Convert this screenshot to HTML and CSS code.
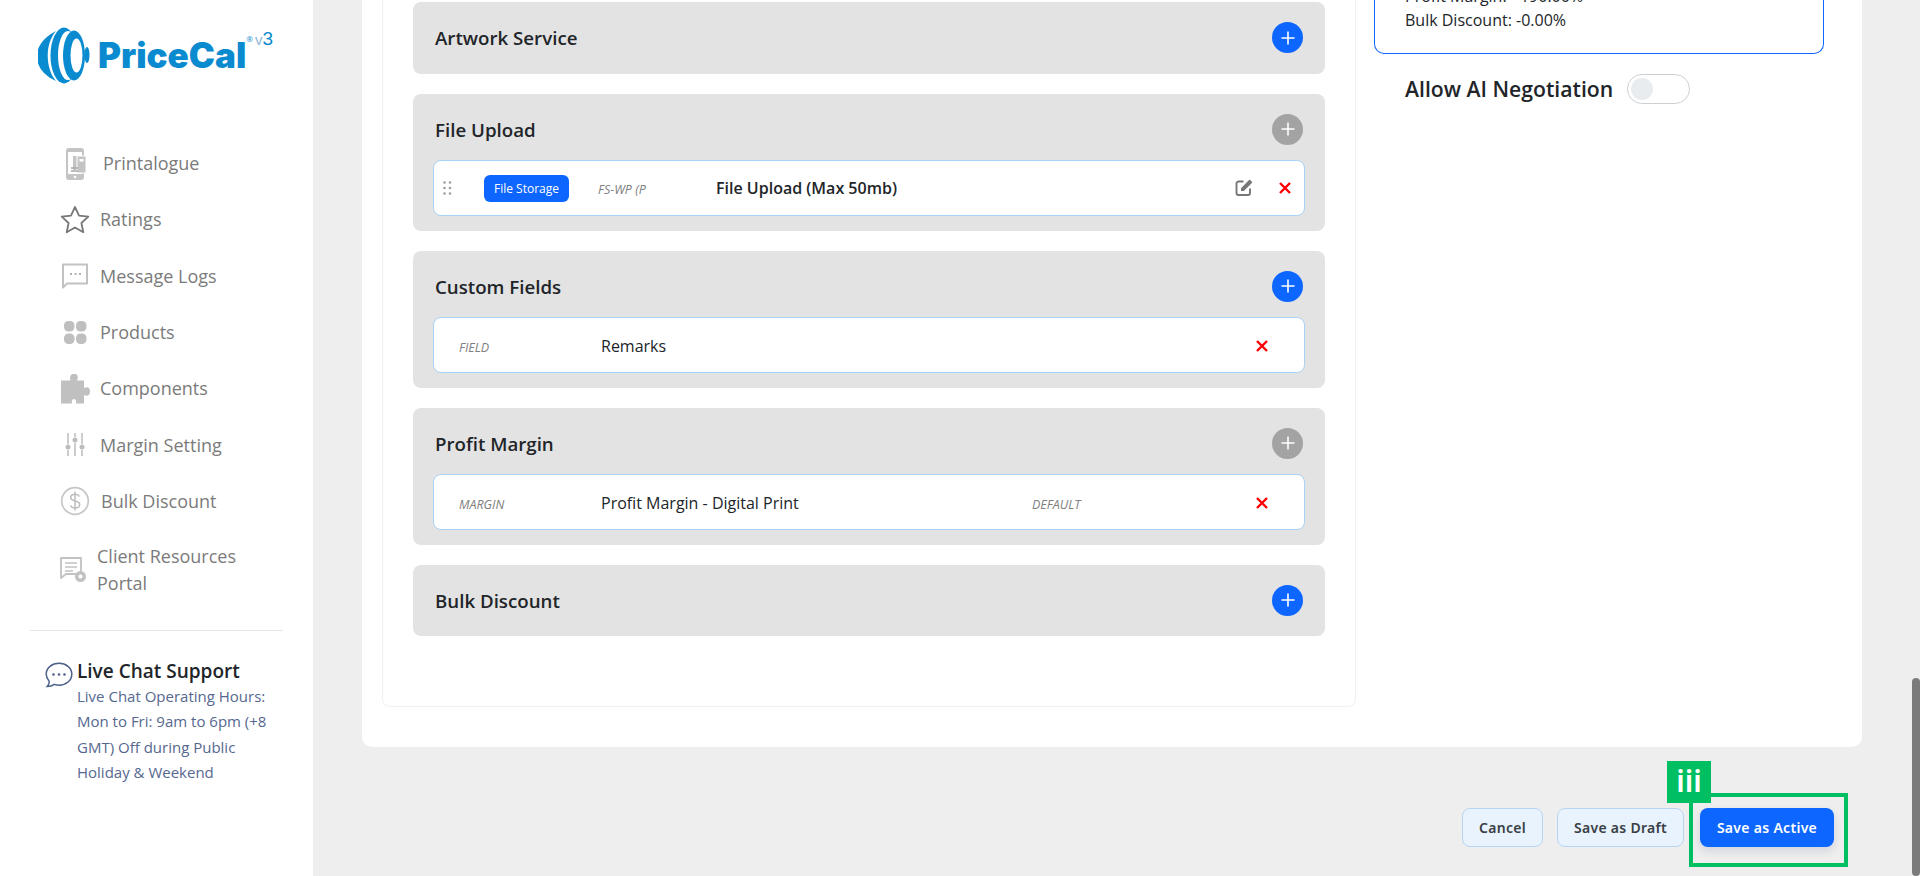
FILE: index.html
```html
<!DOCTYPE html>
<html lang="en">
<head>
<meta charset="utf-8">
<title>PriceCal</title>
<link rel="stylesheet" href="styles.css">
</head>
<body>
<div class="app">
  <aside class="sidebar">
    <div class="logo">
      <svg class="logo-mark" viewBox="38 27 52 57" width="52" height="57" aria-hidden="true">
        <path class="logo-fill" d="M56 31C30 44 31 70 56 81C46 70 44 45 56 31Z"/>
        <ellipse class="logo-fill" cx="64" cy="55.500" rx="13.500" ry="28"/>
        <ellipse class="logo-gap" cx="68" cy="55.500" rx="10" ry="24.500"/>
        <ellipse class="logo-fill" cx="74" cy="55.500" rx="11" ry="25"/>
        <ellipse class="logo-gap" cx="76.500" cy="55.500" rx="6" ry="17"/>
        <ellipse class="logo-fill" cx="87" cy="55" rx="2.500" ry="8"/>
      </svg>
      <span class="logo-name">PriceCal</span>
      <span class="logo-reg">®</span>
      <span class="logo-ver"><span class="logo-v">v</span>3</span>
    </div>
    <nav class="nav">
      <a class="nav-item nav-print">
        <svg class="nav-icon" viewBox="0 0 30 32" width="30" height="32" aria-hidden="true">
          <rect x="6" y="0" width="18" height="32" rx="3" fill="#c4c4c4"/>
          <rect x="8" y="4" width="14" height="22" fill="#fff"/>
          <rect x="13" y="8" width="5" height="14" fill="#c4c4c4"/>
          <rect x="17" y="8" width="9" height="17" fill="#c4c4c4" stroke="#fff" stroke-width="1"/>
          <rect x="19.500" y="11" width="4" height="2.500" fill="#fff"/>
          <path d="M11 20h7M11 23h7" stroke="#a8a8a8" stroke-width="1.500"/>
          <circle cx="15" cy="29" r="1.300" fill="#fff"/>
        </svg>
        <span>Printalogue</span>
      </a>
      <a class="nav-item">
        <svg class="nav-icon" viewBox="0 0 30 30" width="30" height="30" aria-hidden="true">
          <path d="M15 2l4 8.600 9.300 1.100-6.900 6.300 1.900 9.200-8.300-4.700-8.300 4.700 1.900-9.200-6.900-6.300 9.300-1.100z" fill="none" stroke="#777" stroke-width="1.800" stroke-linejoin="round"/>
        </svg>
        <span>Ratings</span>
      </a>
      <a class="nav-item">
        <svg class="nav-icon" viewBox="0 0 30 26" width="30" height="26" aria-hidden="true">
          <path d="M3 1.500h24v19H7l-4 4z" fill="none" stroke="#c2c2c2" stroke-width="2" stroke-linejoin="round"/>
          <path d="M10 11h2M14.500 11h2M19 11h2" stroke="#999" stroke-width="1.500"/>
        </svg>
        <span>Message Logs</span>
      </a>
      <a class="nav-item">
        <svg class="nav-icon" viewBox="0 0 30 24" width="30" height="24" aria-hidden="true">
          <rect x="4" y="0" width="10.500" height="10.500" rx="4.500" fill="#bfbfbf"/>
          <rect x="16" y="0" width="10.500" height="10.500" rx="4.500" fill="#bfbfbf"/>
          <rect x="4" y="12.500" width="10.500" height="10.500" rx="4.500" fill="#bfbfbf"/>
          <rect x="16" y="12.500" width="10.500" height="10.500" rx="4.500" fill="#bfbfbf"/>
        </svg>
        <span>Products</span>
      </a>
      <a class="nav-item">
        <svg class="nav-icon" viewBox="0 0 30 30" width="30" height="30" aria-hidden="true">
          <path d="M1 6.500H10.500C9 2 12 0 12 0h4c2 1 2.500 3.500 1 6.500h7v7.500c3-1.500 6-.5 6 3.500s-3 5-6 3.500V29.500H16c.8-3-.5-4.500-2-4.500s-2.800 1.500-2 4.500H1z" fill="#c0c0c0"/>
        </svg>
        <span>Components</span>
      </a>
      <a class="nav-item">
        <svg class="nav-icon" viewBox="0 0 30 24" width="30" height="24" aria-hidden="true">
          <path d="M8 0v11M8 17v6M15 0v4M15 10v13M22 0v11M22 17v6" stroke="#c0c0c0" stroke-width="1.600"/>
          <circle cx="8" cy="14" r="2.500" fill="#bdbdbd"/>
          <circle cx="15" cy="7" r="2.500" fill="#bdbdbd"/>
          <circle cx="22" cy="14" r="2.500" fill="#bdbdbd"/>
        </svg>
        <span>Margin Setting</span>
      </a>
      <a class="nav-item nav-bulk">
        <svg class="nav-icon" viewBox="0 0 30 30" width="30" height="30" aria-hidden="true">
          <circle cx="15" cy="15" r="13.300" fill="none" stroke="#c6c6c6" stroke-width="1.700"/>
          <path d="M19.500 10.500c-1-1.600-2.600-2.200-4.500-2.200-2.500 0-4.300 1.200-4.300 3.300 0 4.800 9 2.200 9 7 0 2.200-2 3.400-4.700 3.400-2 0-3.700-.8-4.600-2.500M15 5.500v19" fill="none" stroke="#bdbdbd" stroke-width="1.500"/>
        </svg>
        <span>Bulk Discount</span>
      </a>
      <a class="nav-item nav-client">
        <svg class="nav-icon" viewBox="0 0 30 26" width="30" height="26" aria-hidden="true">
          <path d="M1 1h20v16H6l-5 4z" fill="none" stroke="#c2c2c2" stroke-width="1.800" stroke-linejoin="round"/>
          <path d="M5 6h12M5 10h12M5 14h8" stroke="#c2c2c2" stroke-width="1.500"/>
          <circle cx="20.500" cy="19.500" r="5.500" fill="#c2c2c2"/>
          <circle cx="20.500" cy="19.500" r="2" fill="#fff"/>
        </svg>
        <span>Client Resources Portal</span>
      </a>
    </nav>
    <hr class="side-rule">
    <div class="chat">
      <svg class="chat-icon" viewBox="0 0 28 26" width="28" height="26" aria-hidden="true">
        <path d="M14 1.200c7 0 12.800 4.700 12.800 11 0 6.200-5.800 11-12.800 11-1.700 0-3.300-.3-4.800-.8-1.800 1.400-4.300 2.200-7 2.200 1.400-1.500 2.100-3.100 2.100-5C2.800 17.600 1.200 15 1.200 12.200c0-6.300 5.800-11 12.800-11z" fill="none" stroke="#4d6189" stroke-width="1.500"/>
        <circle cx="8.500" cy="12.500" r="1.300" fill="#4d6189"/>
        <circle cx="14" cy="12.500" r="1.300" fill="#4d6189"/>
        <circle cx="19.500" cy="12.500" r="1.300" fill="#4d6189"/>
      </svg>
      <div class="chat-body">
        <h4 class="chat-title">Live Chat Support</h4>
        <p class="chat-text">Live Chat Operating Hours: Mon to Fri: 9am to 6pm (+8 GMT) Off during Public Holiday &amp; Weekend</p>
      </div>
    </div>
  </aside>
  <main class="main">
    <div class="card">
      <div class="builder">
        <section class="group">
          <header class="group-head"><h3>Artwork Service</h3><span class="add"><svg viewBox="0 0 16 16" width="16" height="16" aria-hidden="true"><path d="M8 1.500v13M1.500 8h13"/></svg></span></header>
        </section>
        <section class="group">
          <header class="group-head"><h3>File Upload</h3><span class="add add-off"><svg viewBox="0 0 16 16" width="16" height="16" aria-hidden="true"><path d="M8 1.500v13M1.500 8h13"/></svg></span></header>
          <div class="row row-file">
            <svg class="drag" viewBox="0 0 9 14" width="9" height="14" aria-hidden="true"><g fill="#9aa0a8"><circle cx="1.500" cy="1.500" r="1.300"/><circle cx="7" cy="1.500" r="1.300"/><circle cx="1.500" cy="7" r="1.300"/><circle cx="7" cy="7" r="1.300"/><circle cx="1.500" cy="12.500" r="1.300"/><circle cx="7" cy="12.500" r="1.300"/></g></svg>
            <span class="badge">File Storage</span>
            <span class="code code-file">FS-WP (P</span>
            <span class="name">File Upload (Max 50mb)</span>
            <svg class="edit" viewBox="0 0 18 17" width="18" height="17" aria-hidden="true">
              <path d="M8.500 2.500H3.500a2 2 0 0 0-2 2v9.500a2 2 0 0 0 2 2H13a2 2 0 0 0 2-2V9.500" fill="none" stroke="#777" stroke-width="1.900"/>
              <path d="M6 9.200L13.800 1.300a1.200 1.200 0 0 1 1.700 0l1.200 1.200a1.200 1.200 0 0 1 0 1.700L8.800 12H6z" fill="#777"/>
            </svg>
            <svg class="del" viewBox="0 0 12 12" width="12" height="12" aria-hidden="true"><path d="M1 1l10 10M11 1L1 11"/></svg>
          </div>
        </section>
        <section class="group">
          <header class="group-head"><h3>Custom Fields</h3><span class="add"><svg viewBox="0 0 16 16" width="16" height="16" aria-hidden="true"><path d="M8 1.500v13M1.500 8h13"/></svg></span></header>
          <div class="row row-plain">
            <span class="code">FIELD</span>
            <span class="name">Remarks</span>
            <svg class="del" viewBox="0 0 12 12" width="12" height="12" aria-hidden="true"><path d="M1 1l10 10M11 1L1 11"/></svg>
          </div>
        </section>
        <section class="group">
          <header class="group-head"><h3>Profit Margin</h3><span class="add add-off"><svg viewBox="0 0 16 16" width="16" height="16" aria-hidden="true"><path d="M8 1.500v13M1.500 8h13"/></svg></span></header>
          <div class="row row-plain">
            <span class="code">MARGIN</span>
            <span class="name name-wide">Profit Margin - Digital Print</span>
            <span class="code-default">DEFAULT</span>
            <svg class="del" viewBox="0 0 12 12" width="12" height="12" aria-hidden="true"><path d="M1 1l10 10M11 1L1 11"/></svg>
          </div>
        </section>
        <section class="group">
          <header class="group-head"><h3>Bulk Discount</h3><span class="add"><svg viewBox="0 0 16 16" width="16" height="16" aria-hidden="true"><path d="M8 1.500v13M1.500 8h13"/></svg></span></header>
        </section>
      </div>
      <div class="summary">
        <div class="summary-box">
          <p>Profit Margin: +190.00%</p>
          <p>Bulk Discount: -0.00%</p>
        </div>
        <div class="ai">
          <span class="ai-label">Allow AI Negotiation</span>
          <span class="toggle"><span class="knob"></span></span>
        </div>
      </div>
    </div>
    <div class="actions">
      <button class="btn btn-light">Cancel</button>
      <button class="btn btn-light">Save as Draft</button>
      <button class="btn btn-primary">Save as Active
        <span class="mark"></span>
        <span class="mark-tag">iii</span>
      </button>
    </div>
  </main>
  <div class="scroll-thumb"></div>
</div>
</body>
</html>
```
FILE: styles.css
```css
* { box-sizing: border-box; }
html, body { margin: 0; height: 100%; overflow: hidden; }
body { font-family: "Open Sans", "Noto Sans", sans-serif; color: #212529; background: #eee; }

.app { display: flex; height: 876px; position: relative; overflow: hidden; }

/* Sidebar */
.sidebar { width: 313px; flex: none; background: #fff; font-family: "Open Sans", sans-serif; display: flex; flex-direction: column; }
.logo { display: flex; align-items: flex-start; height: 135.500px; padding: 27px 0 0 38px; color: #0a8bd0; }
.logo-mark { flex: none; }
.logo-fill { fill: #0a8bd0; }
.logo-gap { fill: #fff; }
.logo-name { font-family: Inter, sans-serif; font-weight: 900; font-size: 35px; line-height: 46px; margin: 5px 0 0 8px; }
.logo-reg { font-size: 8px; line-height: 10px; margin: 7px 0 0 0; }
.logo-ver { font-family: "Liberation Sans", sans-serif; font-size: 19px; line-height: 20px; margin: 2px 0 0 2px; }
.logo-v { font-weight: 400; color: #8fb8d8; font-size: 15px; }

.nav { display: flex; flex-direction: column; padding-left: 60px; }
.nav-item { display: flex; align-items: center; gap: 10px; height: 56.300px; font-size: 18px; color: #7b7b7b; line-height: 27px; }
.nav-icon { flex: none; }
.nav-print { gap: 13px; }
.nav-bulk { gap: 11px; }
.nav-client { gap: 7px; height: 64px; margin-top: 8px; width: 205px; }

.side-rule { margin: 28px 30px 0; border: 0; border-top: 1px solid #e6e6e6; }
.chat { display: flex; padding: 27px 0 0 45px; gap: 5px; }
.chat-icon { flex: none; margin-top: 4px; }
.chat-body { margin-left: -1px; }
.chat-title { margin: 0; font-size: 19px; line-height: 26px; font-weight: 600; color: #212529; }
.chat-text { margin: 0; font-size: 15px; line-height: 25.600px; color: #56688f; width: 200px; }

/* Main */
.main { flex: 1; min-width: 0; padding: 0 58px 0 49px; }
.card { height: 747px; background: #fff; border-radius: 0 0 10px 10px; display: flex; padding: 0 38px 40px 20px; gap: 18px; }
.builder { width: 974px; flex: none; border: 1px solid #f1f1f1; border-top: 0; border-radius: 0 0 8px 8px; padding: 2px 30px 0; display: flex; flex-direction: column; gap: 20px; }
.group { background: #e3e3e3; border-radius: 8px; }
.group-head { height: 71.500px; display: flex; align-items: center; justify-content: space-between; padding: 0 22px 0 22px; }
.group-head h3 { margin: 0; font-size: 18.700px; font-weight: 600; color: #212529; }
.add { width: 31px; height: 31px; border-radius: 50%; background: #0d66ff; display: flex; align-items: center; justify-content: center; }
.add-off { background: #a3a3a3; }
.add svg { stroke: #fff; stroke-width: 1.600; fill: none; }

.row { height: 56px; margin: -5px 20px 14.500px; background: #fff; border: 1px solid #a9d2f7; border-radius: 8px; display: flex; align-items: center; }
.row-plain { padding: 2px 36px 0 25px; }
.row-file { padding: 0 13px 0 9px; }
.drag { flex: none; margin-top: -1px; }
.badge { width: 85px; height: 27px; margin-left: 32px; background: #0d66ff; color: #fff; font-size: 12px; border-radius: 6px; display: flex; align-items: center; justify-content: center; }
.code { width: 142px; flex: none; font-size: 12.500px; font-style: italic; color: #808080; margin-top: 2px; }
.code-file { width: 118px; margin-left: 29px; }
.code-default { font-size: 12.500px; font-style: italic; color: #808080; margin-top: 2px; flex: 1; }
.name { font-size: 16px; color: #212529; flex: 1; }
.name-wide { flex: none; width: 431px; }
.row-file .name { font-weight: 600; }
.edit { flex: none; margin-right: 26px; margin-top: -2px; }
.del { flex: none; stroke: #f00; stroke-width: 2.400; fill: none; }

.summary { width: 450px; flex: none; }
.summary-box { height: 54px; border: 1px solid #0d66ff; border-top: 0; border-radius: 0 0 10px 10px; padding: 0 30px 21px; display: flex; flex-direction: column; justify-content: flex-end; overflow: hidden; }
.summary-box p { margin: 0; flex: none; font-size: 16px; line-height: 24px; color: #212529; }
.ai { display: flex; align-items: center; gap: 14px; padding: 20px 0 0 31px; }
.ai-label { font-size: 21.200px; font-weight: 600; color: #212529; line-height: 30px; }
.toggle { width: 63px; height: 30px; border: 1px solid #ccd0d5; border-radius: 15px; background: #fff; display: flex; align-items: center; padding-left: 3px; }
.knob { width: 22px; height: 22px; border-radius: 50%; background: #e9ecef; }

.actions { display: flex; justify-content: flex-end; gap: 14px; padding: 61px 28px 0 0; }
.btn { font-family: "Noto Sans", sans-serif; height: 39px; border-radius: 8px; font-size: 14px; font-weight: 600; letter-spacing: .3px; padding: 0; position: relative; }
.btn-light { background: #e8f3fe; border: 1px solid #b7d5f3; color: #3a3f45; }
.btn:nth-child(1) { width: 81px; }
.btn:nth-child(2) { width: 127px; margin-right: 2px; }
.btn-primary { width: 134px; background: #0d66ff; border: 0; color: #fff; box-shadow: 0 4px 8px rgba(30, 60, 120, .14); }
.mark { position: absolute; left: -11px; right: -14px; top: -15px; bottom: -20px; border: 4px solid #00bf63; }
.mark-tag { position: absolute; left: -33px; top: -47px; width: 44px; height: 42px; background: #00bf63; color: #fff; font-size: 30px; font-weight: 600; letter-spacing: 0; line-height: 40px; text-align: center; }

.scroll-thumb { position: absolute; right: 0; top: 678px; bottom: 0; width: 8px; background: #7b7b7b; border-radius: 4px; }
```
